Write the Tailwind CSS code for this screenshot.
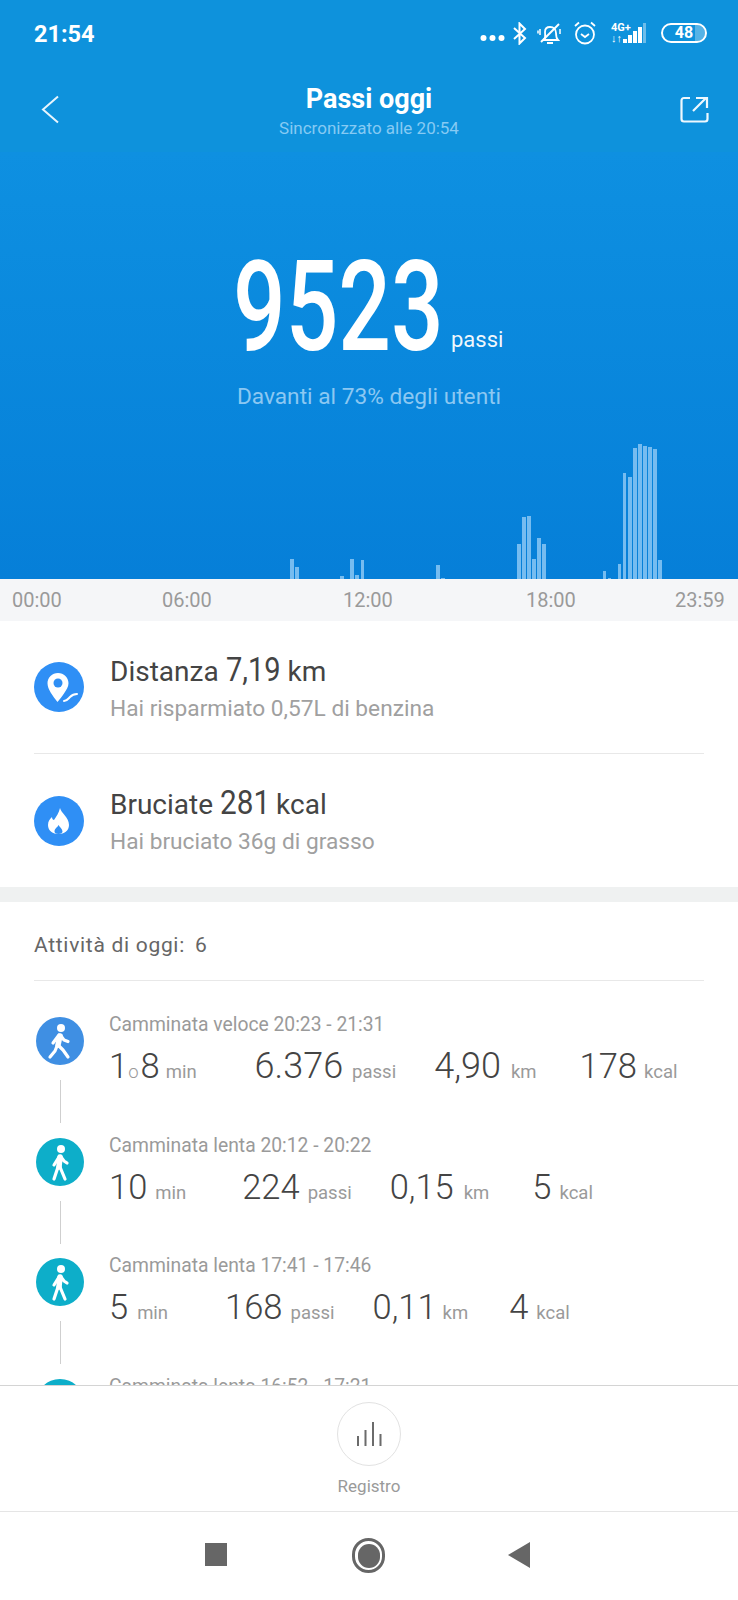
<!doctype html>
<html lang="it">
<head>
<meta charset="utf-8">
<script src="https://cdn.jsdelivr.net/npm/@tailwindcss/browser@4"></script>
</head>
<body class="bg-white">
<div class="w-[738px] h-[1600px] flex flex-col overflow-hidden bg-white font-['Roboto',sans-serif] text-[#444]">

  <header class="h-[152px] shrink-0 bg-[#0e92dc] text-white flex flex-col">
    <div class="h-[66px] flex items-center pl-[34px] pr-[31px] shrink-0">
      <span class="text-[24px] font-bold leading-none w-[62px] origin-left scale-x-[0.98] relative top-[1px]">21:54</span>
      <div class="ml-auto flex items-center">
        <svg class="w-[25px] h-[8px] relative top-[5px]" viewBox="0 0 25 8" fill="#fff"><circle cx="3.500" cy="4" r="3"/><circle cx="12.500" cy="4" r="3"/><circle cx="21.500" cy="4" r="3"/></svg>
        <svg class="ml-[7px] w-[16px] h-[23px]" viewBox="0 0 16 23" fill="none" stroke="#fff" stroke-width="2"><path d="M2 6l11 10-5.500 5.500V1.500L13 7 2 17"/></svg>
        <svg class="ml-[9px] w-[25px] h-[23px]" viewBox="0 0 25 23" fill="none" stroke="#fff" stroke-width="1.800"><path d="M7 18h14c-2-2-2-4-2-7 0-3-2-6-6-6s-5 3-5 5c0 3 1 6-1 8z"/><path d="M10 21h6" stroke-width="2"/><path d="M4 20L22 2" stroke-width="2"/><path d="M3 7v6M1 8.500v3M23 7v5" stroke-width="1.500"/></svg>
        <svg class="ml-[11px] w-[24px] h-[24px]" viewBox="0 0 24 24" fill="none" stroke="#fff" stroke-width="1.800"><circle cx="12" cy="13.500" r="9"/><path d="M8 13l4 3 4-3M2 5l4-3.500M22 5l-4-3.500"/></svg>
        <div class="ml-[14px] w-[40px] h-[22px] relative">
          <span class="absolute left-0 top-[1px] text-[11px] leading-[9px] font-bold">4G+</span>
          <span class="absolute left-0 top-[12px] text-[11px] leading-[9px] font-bold">↓↑</span>
          <div class="absolute left-[12px] bottom-[1px] flex items-end gap-[1px]">
            <div class="w-[4px] h-[4px] bg-white"></div>
            <div class="w-[4px] h-[8px] bg-white"></div>
            <div class="w-[4px] h-[12px] bg-white"></div>
            <div class="w-[4px] h-[16px] bg-white"></div>
            <div class="w-[3px] h-[20px] bg-white/40"></div>
          </div>
        </div>
        <div class="ml-[10px] w-[46px] h-[20px] rounded-full border-2 border-white flex items-center justify-center relative overflow-hidden">
          <span class="absolute right-0 top-0 bottom-0 w-[10px] bg-white/30"></span>
          <span class="text-[16px] font-bold leading-none">48</span>
        </div>
      </div>
    </div>
    <div class="flex-1 relative flex flex-col items-center">
      <svg class="absolute left-[41px] top-[29px] w-[19px] h-[29px]" viewBox="0 0 19 29" fill="none" stroke="#e8f5fd" stroke-width="2"><path d="M17 1.500L2 14.500 17 27.500"/></svg>
      <svg class="absolute left-[680px] top-[30px] w-[29px] h-[27px]" viewBox="0 0 29 27" fill="none" stroke="#eef8fe" stroke-width="2.200"><path d="M10 2H4C2.500 2 1.500 3 1.500 4.500V23c0 1.500 1 2.500 2.500 2.500h21c1.500 0 2.500-1 2.500-2.500v-6"/><path d="M13 15L26 2M16 2h11v10"/></svg>
      <h1 class="mt-[18px] text-[27px] leading-[30px] font-bold">Passi oggi</h1>
      <p class="mt-[4px] text-[17px] leading-[20px] text-[#86caf3]">Sincronizzato alle 20:54</p>
    </div>
  </header>

  <section class="h-[427px] shrink-0 bg-gradient-to-b from-[#0e90e1] to-[#067fd8] flex flex-col">
    <div class="mt-[95px] h-[120px] flex items-end pl-[233px]">
      <span class="block w-[208px] text-[126px] leading-[120px] font-medium text-white origin-left scale-x-[0.735] whitespace-nowrap">9523</span>
      <span class="ml-[10px] text-[22px] leading-[26px] text-white/95 relative top-[-14px]">passi</span>
    </div>
    <p class="mt-[16px] text-center text-[22.7px] leading-[28px] text-[#8cc8f2]">Davanti al 73% degli utenti</p>
    <div class="mt-auto h-[145px] grid grid-cols-[repeat(146,1fr)] items-end pl-[2px] w-[738px]">
      <div class="bg-[#76bcf0] w-[3.800px] justify-self-center col-start-[58]" style="height:20px"></div>
      <div class="bg-[#76bcf0] w-[3.800px] justify-self-center col-start-[59]" style="height:12px"></div>
      <div class="bg-[#76bcf0] w-[3.800px] justify-self-center col-start-[68]" style="height:3px"></div>
      <div class="bg-[#76bcf0] w-[3.800px] justify-self-center col-start-[70]" style="height:20px"></div>
      <div class="bg-[#76bcf0] w-[3.800px] justify-self-center col-start-[71]" style="height:4px"></div>
      <div class="bg-[#76bcf0] w-[3.800px] justify-self-center col-start-[72]" style="height:19px"></div>
      <div class="bg-[#76bcf0] w-[3.800px] justify-self-center col-start-[87]" style="height:14px"></div>
      <div class="bg-[#76bcf0] w-[3.800px] justify-self-center col-start-[88]" style="height:1px"></div>
      <div class="bg-[#76bcf0] w-[3.800px] justify-self-center col-start-[103]" style="height:35px"></div>
      <div class="bg-[#76bcf0] w-[3.800px] justify-self-center col-start-[104]" style="height:62px"></div>
      <div class="bg-[#76bcf0] w-[3.800px] justify-self-center col-start-[105]" style="height:63px"></div>
      <div class="bg-[#76bcf0] w-[3.800px] justify-self-center col-start-[106]" style="height:20px"></div>
      <div class="bg-[#76bcf0] w-[3.800px] justify-self-center col-start-[107]" style="height:41px"></div>
      <div class="bg-[#76bcf0] w-[3.800px] justify-self-center col-start-[108]" style="height:35px"></div>
      <div class="bg-[#76bcf0] w-[3.800px] justify-self-center col-start-[120]" style="height:8px"></div>
      <div class="bg-[#76bcf0] w-[3.800px] justify-self-center col-start-[121]" style="height:1px"></div>
      <div class="bg-[#76bcf0] w-[3.800px] justify-self-center col-start-[123]" style="height:15px"></div>
      <div class="bg-[#76bcf0] w-[3.800px] justify-self-center col-start-[124]" style="height:106px"></div>
      <div class="bg-[#76bcf0] w-[3.800px] justify-self-center col-start-[125]" style="height:102px"></div>
      <div class="bg-[#76bcf0] w-[3.800px] justify-self-center col-start-[126]" style="height:131px"></div>
      <div class="bg-[#76bcf0] w-[3.800px] justify-self-center col-start-[127]" style="height:135px"></div>
      <div class="bg-[#76bcf0] w-[3.800px] justify-self-center col-start-[128]" style="height:133px"></div>
      <div class="bg-[#76bcf0] w-[3.800px] justify-self-center col-start-[129]" style="height:132px"></div>
      <div class="bg-[#76bcf0] w-[3.800px] justify-self-center col-start-[130]" style="height:130px"></div>
      <div class="bg-[#76bcf0] w-[3.800px] justify-self-center col-start-[131]" style="height:19px"></div>
    </div>
  </section>

  <div class="h-[42px] shrink-0 bg-[#f5f6f8] flex items-center pl-[12px] text-[20px] text-[#9a9a9a] leading-none">
    <span class="w-[50px]">00:00</span>
    <span class="ml-[100px] w-[51px]">06:00</span>
    <span class="ml-[130px] w-[50px]">12:00</span>
    <span class="ml-[133px] w-[50px]">18:00</span>
    <span class="ml-[99px] w-[51px]">23:59</span>
  </div>

  <section class="h-[266px] shrink-0 px-[34px]">
    <div class="h-[133px] border-b border-[#e8e8e8] flex items-center">
      <div class="w-[50px] h-[50px] rounded-full bg-[#2f8ff5] shrink-0">
        <svg class="w-[50px] h-[50px]" viewBox="0 0 50 50"><path fill="#fff" d="M24 11c-5.800 0-10.500 4.500-10.500 10.300 0 6 5.500 13 10 18.700 2-2.500 4.500-5.500 6.500-8.500 2.500-3.500 4.500-7 4.500-10.200C34.500 15.500 29.800 11 24 11z"/><circle cx="24" cy="21" r="4.500" fill="#2f8ff5"/><path d="M30 39c3 0 4-2 6-4s3-3 7-3" fill="none" stroke="#fff" stroke-width="2" stroke-linecap="round"/></svg>
      </div>
      <div class="ml-[26px]">
        <p class="h-[43px] flex items-baseline text-[28px] leading-[40px] text-[#444]">Distanza<span class="ml-[7px] w-[54px] text-[33px] font-normal origin-left scale-x-[0.88] whitespace-nowrap">7,19</span><span class="ml-[8px]">km</span></p>
        <p class="h-[32px] text-[22.7px] leading-[32px] text-[#a0a0a0]">Hai risparmiato 0,57L di benzina</p>
      </div>
    </div>
    <div class="h-[133px] flex items-center">
      <div class="w-[50px] h-[50px] rounded-full bg-[#2f8ff5] shrink-0">
        <svg class="w-[50px] h-[50px]" viewBox="0 0 50 50"><path fill="#fff" d="M26 12c1 5 9 9 9 17 0 6-5 9-10.500 9S14 35 14 29c0-4 2-6 4-8 0 2 1 3 2 3 2-3 5-7 6-12z"/><path fill="#2f8ff5" d="M24.500 29c1 2 4 4 4 6.500 0 1.500-1.500 2.500-4 2.500s-4-1-4-2.500c0-3 3-4 4-6.500z"/></svg>
      </div>
      <div class="ml-[26px]">
        <p class="h-[43px] flex items-baseline text-[28px] leading-[40px] text-[#444]">Bruciate<span class="ml-[7px] w-[47px] text-[33px] font-normal origin-left scale-x-[0.9] whitespace-nowrap">281</span><span class="ml-[9px]">kcal</span></p>
        <p class="h-[32px] text-[22.7px] leading-[32px] text-[#a0a0a0]">Hai bruciato 36g di grasso</p>
      </div>
    </div>
  </section>

  <div class="h-[15px] shrink-0 bg-[#eff1f1]"></div>

  <section class="flex-1 min-h-0 overflow-hidden">
    <div class="mx-[34px] h-[79px] border-b border-[#e8e8e8] flex items-center text-[21px] tracking-[0.7px] text-[#666]"><span class="relative top-[5px]">Attività di oggi:</span><span class="ml-[10px] relative top-[5px]">6</span></div>
    <div class="pt-[36px]">

      <article class="h-[120.5px] flex pl-[36px]">
        <div class="w-[48px] flex flex-col items-center">
          <div class="w-[48px] h-[48px] rounded-full bg-[#3f8fe3]">
            <svg class="w-[48px] h-[48px]" viewBox="0 0 48 48" fill="none" stroke="#fff" stroke-width="3.200" stroke-linecap="round" stroke-linejoin="round"><circle cx="25" cy="11" r="4" fill="#fff" stroke="none"/><path d="M24 19l-2 9" stroke-width="5.500"/><path d="M23 18l-6 8M25 19l3 4 4 1.500"/><path d="M22 28l5 5 5 7M21 29l-2 5-5 6"/></svg>
          </div>
          <div class="mt-[15px] w-[1px] h-[43px] bg-[#cfcfcf]"></div>
        </div>
        <div class="ml-[25px]">
          <p class="h-[27px] mt-[-6px] text-[19.3px] leading-[27px] text-[#9a9a9a]">Camminata veloce 20:23 - 21:31</p>
          <div class="flex items-baseline h-[44px] mt-[6px] text-[34.5px] leading-[44px] font-light text-[#444]">
            <div class="flex items-baseline"><span>1</span><span class="text-[18.5px] text-[#9a9a9a]">o</span><span class="ml-[2px]">8</span><span class="ml-[6px] text-[18.5px] font-normal text-[#9a9a9a]">min</span></div>
            <div class="ml-[58px] flex items-baseline"><span class="text-[36px]">6.376</span><span class="ml-[9px] text-[18.5px] font-normal text-[#9a9a9a]">passi</span></div>
            <div class="ml-[38px] flex items-baseline"><span class="text-[36px]">4,90</span><span class="ml-[10px] text-[18.5px] font-normal text-[#9a9a9a]">km</span></div>
            <div class="ml-[43px] flex items-baseline"><span>178</span><span class="ml-[7px] text-[18.5px] font-normal text-[#9a9a9a]">kcal</span></div>
          </div>
        </div>
      </article>

      <article class="h-[120.5px] flex pl-[36px]">
        <div class="w-[48px] flex flex-col items-center">
          <div class="w-[48px] h-[48px] rounded-full bg-[#0daec9]">
            <svg class="w-[48px] h-[48px]" viewBox="0 0 48 48" fill="none" stroke="#fff" stroke-width="3.200" stroke-linecap="round" stroke-linejoin="round"><circle cx="25" cy="11" r="4" fill="#fff" stroke="none"/><path d="M24 19l-1 10" stroke-width="5.500"/><path d="M23 19l-5 8M25 19l3 4 3 2"/><path d="M22 29l-4 12M24 29l5 12"/></svg>
          </div>
          <div class="mt-[15px] w-[1px] h-[43px] bg-[#cfcfcf]"></div>
        </div>
        <div class="ml-[25px]">
          <p class="h-[27px] mt-[-6px] text-[19.3px] leading-[27px] text-[#9a9a9a]">Camminata lenta 20:12 - 20:22</p>
          <div class="flex items-baseline h-[44px] mt-[6px] text-[34.5px] leading-[44px] font-light text-[#444]">
            <div class="flex items-baseline"><span>10</span><span class="ml-[8px] text-[18.5px] font-normal text-[#9a9a9a]">min</span></div>
            <div class="ml-[56px] flex items-baseline"><span>224</span><span class="ml-[8px] text-[18.5px] font-normal text-[#9a9a9a]">passi</span></div>
            <div class="ml-[38px] flex items-baseline"><span>0,15</span><span class="ml-[10px] text-[18.5px] font-normal text-[#9a9a9a]">km</span></div>
            <div class="ml-[43px] flex items-baseline"><span>5</span><span class="ml-[8px] text-[18.5px] font-normal text-[#9a9a9a]">kcal</span></div>
          </div>
        </div>
      </article>

      <article class="h-[120.5px] flex pl-[36px]">
        <div class="w-[48px] flex flex-col items-center">
          <div class="w-[48px] h-[48px] rounded-full bg-[#0daec9]">
            <svg class="w-[48px] h-[48px]" viewBox="0 0 48 48" fill="none" stroke="#fff" stroke-width="3.200" stroke-linecap="round" stroke-linejoin="round"><circle cx="25" cy="11" r="4" fill="#fff" stroke="none"/><path d="M24 19l-1 10" stroke-width="5.500"/><path d="M23 19l-5 8M25 19l3 4 3 2"/><path d="M22 29l-4 12M24 29l5 12"/></svg>
          </div>
          <div class="mt-[15px] w-[1px] h-[43px] bg-[#cfcfcf]"></div>
        </div>
        <div class="ml-[25px]">
          <p class="h-[27px] mt-[-6px] text-[19.3px] leading-[27px] text-[#9a9a9a]">Camminata lenta 17:41 - 17:46</p>
          <div class="flex items-baseline h-[44px] mt-[6px] text-[34.5px] leading-[44px] font-light text-[#444]">
            <div class="flex items-baseline"><span>5</span><span class="ml-[9px] text-[18.5px] font-normal text-[#9a9a9a]">min</span></div>
            <div class="ml-[57px] flex items-baseline"><span>168</span><span class="ml-[8px] text-[18.5px] font-normal text-[#9a9a9a]">passi</span></div>
            <div class="ml-[38px] flex items-baseline"><span>0,11</span><span class="ml-[6px] text-[18.5px] font-normal text-[#9a9a9a]">km</span></div>
            <div class="ml-[41px] flex items-baseline"><span>4</span><span class="ml-[8px] text-[18.5px] font-normal text-[#9a9a9a]">kcal</span></div>
          </div>
        </div>
      </article>

      <article class="h-[120.5px] flex pl-[36px]">
        <div class="w-[48px] flex flex-col items-center">
          <div class="w-[48px] h-[48px] rounded-full bg-[#0daec9]"></div>
        </div>
        <div class="ml-[25px]">
          <p class="h-[27px] mt-[-6px] text-[19.3px] leading-[27px] text-[#9a9a9a]">Camminata lenta 16:52 - 17:21</p>
        </div>
      </article>
    </div>
  </section>

  <footer class="h-[126px] shrink-0 bg-white border-t border-[#d4d4d4] flex flex-col items-center">
    <div class="mt-[16px] w-[64px] h-[64px] rounded-full border-[1.500px] border-[#e2e2e2] flex items-center justify-center">
      <svg class="w-[26px] h-[24px]" viewBox="0 0 26 24" stroke="#6b6b6b" stroke-width="2"><path d="M2 24V14M9.500 24V8M17 24V0M24.500 24V12"/></svg>
    </div>
    <span class="mt-[10px] text-[17px] leading-[20px] text-[#9a9a9a]">Registro</span>
  </footer>

  <nav class="h-[89px] shrink-0 bg-white border-t border-[#e5e5e5] relative">
    <div class="absolute left-[205px] top-[31px] w-[22px] h-[23px] bg-[#666]"></div>
    <div class="absolute left-[352px] top-[26px] w-[33px] h-[35px] rounded-full border-[3px] border-[#666] flex items-center justify-center"><div class="w-[22px] h-[24px] rounded-full bg-[#666]"></div></div>
    <svg class="absolute left-[508px] top-[30px] w-[23px] h-[26px]" viewBox="0 0 23 26" fill="#666"><path d="M22 0v26L0 13z"/></svg>
  </nav>
</div>
</body>
</html>
